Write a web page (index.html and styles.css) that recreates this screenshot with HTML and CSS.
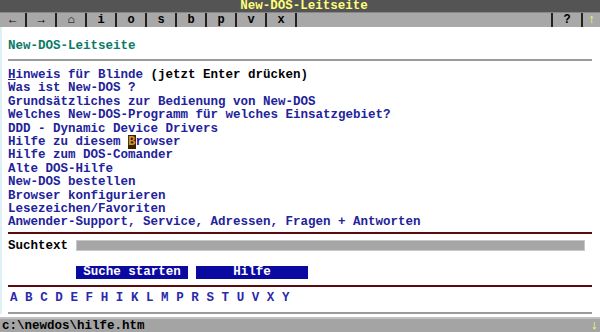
FILE: index.html
```html
<!DOCTYPE html>
<html>
<head>
<meta charset="utf-8">
<link rel="stylesheet" href="styles.css">
</head>
<body>
<div class="titlebar">New-DOS-Leitseite</div>
<div class="toolbar">
  <span class="tb first">&larr;</span>
  <span class="tb">&rarr;</span>
  <span class="tb">&#8962;</span>
  <span class="tb">i</span>
  <span class="tb">o</span>
  <span class="tb">s</span>
  <span class="tb">b</span>
  <span class="tb">p</span>
  <span class="tb">v</span>
  <span class="tb">x</span>
  <span class="tb-fill"></span>
  <span class="tb help">?</span>
  <span class="tb up">&uarr;</span>
</div>
<div class="page">
  <div class="heading">New-DOS-Leitseite</div>
  <div class="rule-gray top-rule"></div>
  <div class="links">
    <div class="line"><span class="link"><u>H</u>inweis für Blinde</span> <span class="note">(jetzt Enter drücken)</span></div>
    <div class="line link">Was ist New-DOS ?</div>
    <div class="line link">Grundsätzliches zur Bedienung von New-DOS</div>
    <div class="line link">Welches New-DOS-Programm für welches Einsatzgebiet?</div>
    <div class="line link">DDD - Dynamic Device Drivers</div>
    <div class="line link">Hilfe zu diesem <span class="cursor">B</span>rowser</div>
    <div class="line link">Hilfe zum DOS-Comander</div>
    <div class="line link">Alte DOS-Hilfe</div>
    <div class="line link">New-DOS bestellen</div>
    <div class="line link">Browser konfigurieren</div>
    <div class="line link">Lesezeichen/Favoriten</div>
    <div class="line link">Anwender-Support, Service, Adressen, Fragen + Antworten</div>
  </div>
  <div class="rule-red first-red"></div>
  <div class="search">
    <span class="label">Suchtext</span>
    <span class="input"></span>
  </div>
  <div class="buttons">
    <span class="btn">Suche starten</span>
    <span class="btn">Hilfe</span>
  </div>
  <div class="rule-red second-red"></div>
  <div class="alpha">
    <span>A</span><span>B</span><span>C</span><span>D</span><span>E</span><span>F</span><span>H</span><span>I</span><span>K</span><span>L</span><span>M</span><span>P</span><span>R</span><span>S</span><span>T</span><span>U</span><span>V</span><span>X</span><span>Y</span>
  </div>
  <div class="rule-gray bottom-rule"></div>
</div>
<div class="status">
  <span class="path">c:\newdos\hilfe.htm</span>
  <span class="down">&darr;</span>
</div>
</body>
</html>
```
FILE: styles.css
```css
html, body {
  margin: 0;
  padding: 0;
  background: #ffffff;
}
body {
  width: 600px;
  height: 332px;
  overflow: hidden;
  font-family: "Liberation Mono", "DejaVu Sans Mono", monospace;
  font-weight: bold;
  font-size: 12.5px;
  display: flex;
  flex-direction: column;
}
.titlebar {
  height: 12px;
  line-height: 12px;
  background: #545454;
  color: #ffff78;
  text-align: center;
  padding-left: 8px;
  font-size: 12.5px;
}
.toolbar {
  height: 14px;
  background: #a8a8a8;
  display: flex;
  border-top: 1px solid #888;
  line-height: 14px;
}
.tb {
  width: 28px;
  text-align: center;
  border-right: 2px solid #222;
  color: #000;
  font-size: 12px;
}
.tb.first {
  width: 25px;
}
.tb-fill {
  flex: 1;
  border-right: 2px solid #222;
}
.tb.help {
  width: 28px;
}
.tb.up {
  width: 17px;
  border-right: none;
  color: #ffff60;
}
.page {
  flex: none;
  border-left: 2px solid #dcf0f6;
  padding: 0 8px 0 6px;
  display: flex;
  flex-direction: column;
}
.heading {
  color: #0a7a68;
  margin-top: 13px;
  line-height: 13px;
}
.rule-gray {
  height: 0;
  border-top: 2px solid #9a9a9a;
}
.top-rule {
  margin-top: 6px;
}
.links {
  margin-top: 8px;
}
.line {
  line-height: 13.4px;
  white-space: pre;
}
.link {
  color: #22229a;
}
.note {
  color: #000;
}
.cursor {
  background: #3a2200;
  color: #d09040;
}
.rule-red {
  height: 0;
  border-top: 2px solid #5a0a0a;
}
.first-red {
  margin-top: 2px;
}
.search {
  display: flex;
  align-items: center;
  margin-top: 6px;
  height: 12px;
}
.label {
  width: 68px;
  color: #000;
  line-height: 12px;
}
.input {
  width: 509px;
  height: 11px;
  background: #a6a6a6;
  border: 1px solid #c8c8c8;
  box-sizing: border-box;
}
.buttons {
  display: flex;
  gap: 8px;
  margin-top: 14px;
  padding-left: 68px;
}
.btn {
  width: 112px;
  height: 13px;
  line-height: 13px;
  background: #0a0aa0;
  color: #ffffff;
  text-align: center;
}
.second-red {
  margin-top: 6px;
}
.alpha {
  display: flex;
  gap: 7.6px;
  color: #2a2aaa;
  margin-top: 5px;
  line-height: 13px;
  padding-left: 2px;
}
.bottom-rule {
  margin-top: 7px;
}
.status {
  flex: 1;
  background: #a4a4a4;
  border-top: 2px solid #c0c0c0;
  margin-top: 3px;
  display: flex;
  justify-content: space-between;
  align-items: center;
  color: #000;
  padding-left: 2px;
}
.down {
  color: #ffff60;
  padding-right: 2px;
}
```
